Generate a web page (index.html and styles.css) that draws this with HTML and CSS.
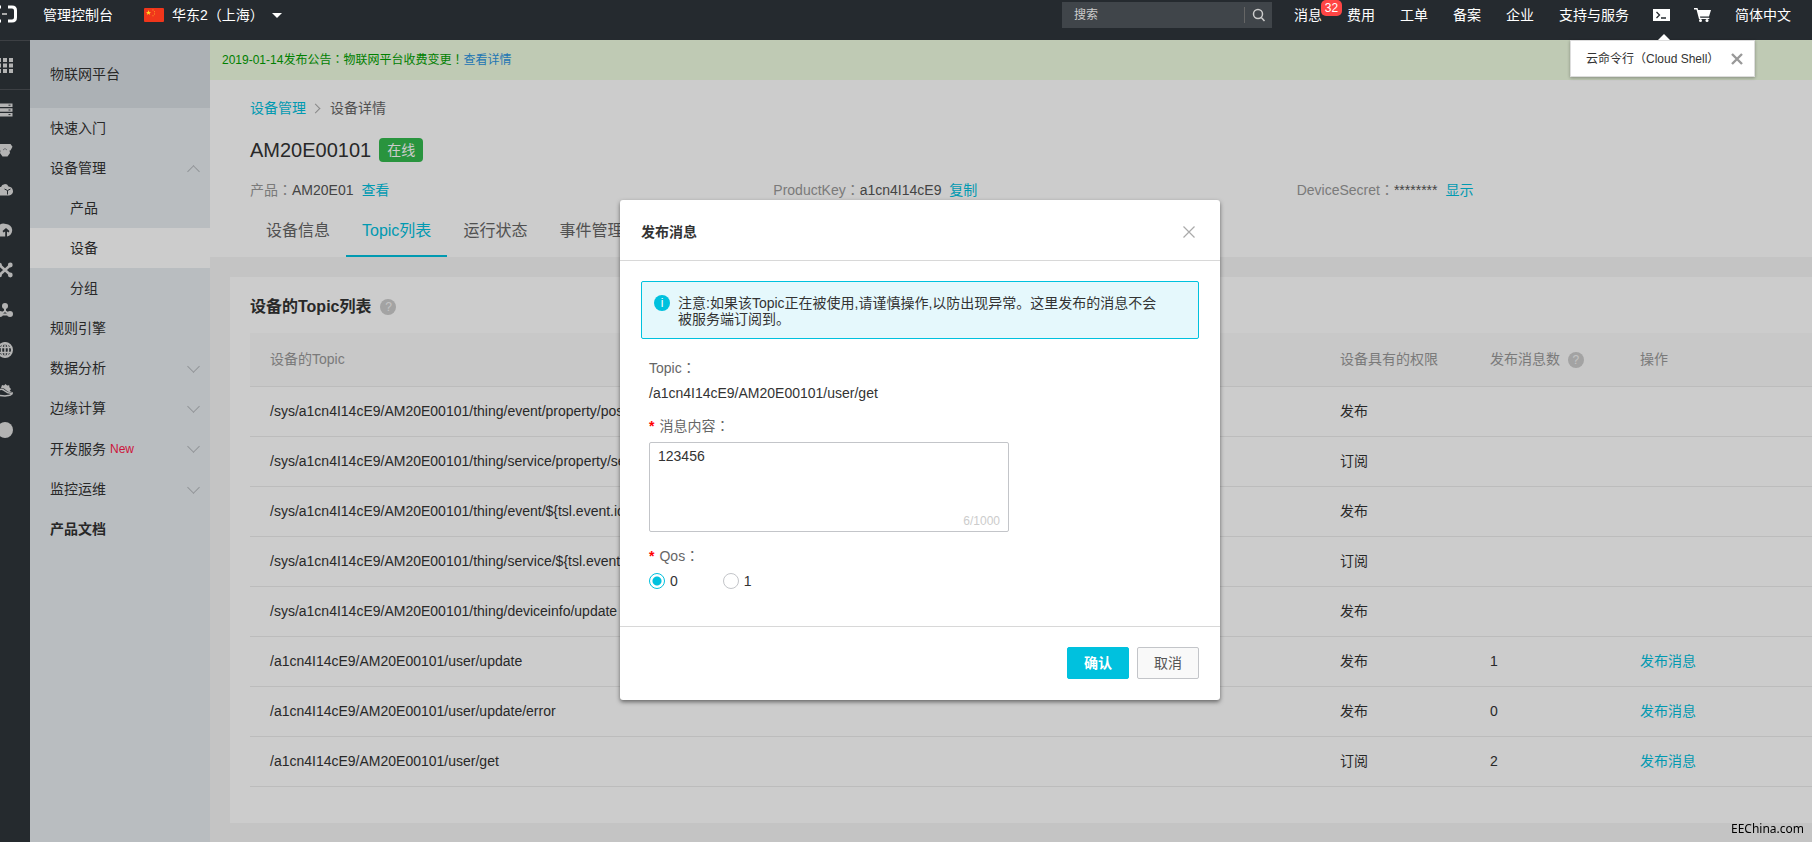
FILE: index.html
```html
<!DOCTYPE html>
<html lang="zh-CN">
<head>
  <meta charset="utf-8">
  <title>物联网平台</title>
  <link rel="stylesheet" href="styles.css">
</head>
<body>
  <header class="topbar">
    <a href="#" class="logo" aria-label="home">
      <svg width="26" height="18" viewBox="0 0 26 18" fill="none" stroke="#fff" stroke-width="3">
        <path d="M10 2H5Q1.500 2 1.500 5.500V12.500Q1.500 16 5 16H10"/>
        <path d="M17 2H21Q24.500 2 24.500 5.500V12.500Q24.500 16 21 16H17"/>
        <path d="M11 9H16" stroke="#aaa" stroke-width="2"/>
      </svg>
    </a>
    <a href="#" class="console">管理控制台</a>
    <button class="region">
      <svg width="20" height="14" viewBox="0 0 20 14">
        <rect width="20" height="14" rx="1" fill="#f0361b"/>
        <path d="M4.500 2l.7 1.900h2l-1.600 1.200.6 1.900-1.700-1.200-1.700 1.200.6-1.900-1.600-1.200h2z" fill="#ffd522"/>
        <path d="M8.500 1.500h1v1h-1zM10 3.300h1v1h-1zM10 5.500h1v1h-1zM8.500 7.200h1v1h-1z" fill="#ff9d22"/>
      </svg>
      <span>华东2（上海）</span>
      <i class="caret"></i>
    </button>
    <div class="search">
      <input type="text" placeholder="搜索" aria-label="搜索">
      <button aria-label="搜索">
        <svg width="14" height="14" viewBox="0 0 14 14" fill="none" stroke="#ccc" stroke-width="1.500"><circle cx="6" cy="6" r="4.500"/><path d="M9.300 9.500L12.500 13"/></svg>
      </button>
    </div>
    <nav class="top-links">
      <a href="#" class="msg">消息<span class="count">32</span></a>
      <a href="#">费用</a>
      <a href="#">工单</a>
      <a href="#">备案</a>
      <a href="#">企业</a>
      <a href="#">支持与服务</a>
    </nav>
    <div class="top-icons">
      <div class="shell-link">
        <a href="#" aria-label="Cloud Shell">
          <svg width="17" height="12" viewBox="0 0 17 12"><rect width="17" height="12" fill="#fff"/><path d="M3.500 3l3 3-3 3M8 9h5" fill="none" stroke="#252a2f" stroke-width="1.300"/></svg>
        </a>
        <div class="shell-tip">
          <span>云命令行（Cloud Shell）</span>
          <button aria-label="关闭">
            <svg width="12" height="12" viewBox="0 0 12 12" stroke="#999" stroke-width="2.400"><path d="M1 1l10 10M11 1L1 11"/></svg>
          </button>
        </div>
      </div>
      <a href="#" aria-label="cart">
        <svg width="17" height="14" viewBox="0 0 17 14" fill="#fff"><path d="M0 0h3.500l.6 2H17l-2 6.500H6l.3 1.200h9V11H5L2.500 1.500H0z"/><circle cx="6.500" cy="12.500" r="1.500"/><circle cx="13" cy="12.500" r="1.500"/></svg>
      </a>
      <a href="#">简体中文</a>
    </div>
  </header>

  <div class="page">
    <nav class="rail">
      <a href="#" class="apps" aria-label="全部产品">
        <svg width="16" height="16" viewBox="0 0 16 16"><path d="M0 1h4v4H0zM6 1h4v4H6zM12 1h4v4h-4zM0 6.500h4v4H0zM6 6.500h4v4H6zM12 6.500h4v4h-4zM0 12h4v4H0zM6 12h4v4H6zM12 12h4v4h-4z"/></svg>
      </a>
      <a href="#" aria-label="ECS"><svg width="16" height="16" viewBox="0 0 16 16"><path d="M0 1.500h15.500v3.500H0zM0 6.200h15.500v3.500H0zM0 10.900h15.500v3.500H0z"/><path d="M11.500 3.200h2M11.500 8h2M11.500 12.600h2" stroke="#2f353a"/></svg></a>
      <a href="#" aria-label="RDS"><svg width="16" height="16" viewBox="0 0 16 16"><path d="M1.500 2h12l2 2.800-2 3.700h-1l.5 2.500-2.500 3.500h-5L3 11l.5-2.500h-2L0 4.800z"/><path d="M6 8l2-1.500L10 8" fill="none" stroke="#8a8e92"/></svg></a>
      <a href="#" aria-label="云"><svg width="16" height="16" viewBox="0 0 16 16"><path d="M4 5a4 4 0 0 1 7.500-.5A5 5 0 0 1 16 9a4.200 4.200 0 0 1-4 4.500H3A4 4 0 0 1 0 9.500 4 4 0 0 1 4 5z"/><path d="M10.500 8.500l3-1.500M10.500 8.500v4M10.500 8.500L7.500 7" stroke="#2f353a" stroke-width="1" fill="none"/></svg></a>
      <a href="#" aria-label="OSS"><svg width="16" height="16" viewBox="0 0 16 16"><path d="M0 11a7 7 0 0 1 9-9 6.300 6.300 0 0 1 1 12.500V9.500l1.500 1L12.500 9 9 6 5.500 9l1 1.500 1.700-1v5H1z"/></svg></a>
      <a href="#" aria-label="CDN"><svg width="16" height="16" viewBox="0 0 16 16"><path d="M2.500 3l11 10M13.500 3l-11 10" stroke="#e0e0e0" stroke-width="2.600"/><circle cx="2.500" cy="3" r="2.400"/><circle cx="13.300" cy="3" r="2.400"/><circle cx="2.500" cy="13" r="2.400"/><circle cx="13.300" cy="13" r="2.400"/></svg></a>
      <a href="#" aria-label="SLB"><svg width="16" height="16" viewBox="0 0 16 16"><path d="M8 4v5M8 9l-5 3.500M8 9l5 3.500M3 12.500h10" stroke="#e0e0e0" stroke-width="2"/><circle cx="8" cy="4" r="3"/><circle cx="3" cy="12" r="3"/><circle cx="13" cy="12" r="3"/></svg></a>
      <a href="#" aria-label="域名"><svg width="16" height="16" viewBox="0 0 16 16" fill="none" stroke="#e0e0e0" stroke-width="2"><circle cx="8" cy="8" r="7"/><ellipse cx="8" cy="8" rx="3.500" ry="7" stroke-width="1.500"/><path d="M1 5.500h14M1 10.500h14M8 1v14" stroke-width="1.500"/></svg></a>
      <a href="#" aria-label="云监控"><svg width="16" height="16" viewBox="0 0 16 16"><path d="M4 6l1-3 2 .5L8.500 2l1.600 1.500 2.100-.3.200 2L14 7l-1.300 2 3.300 1.500-5-.8L7 6.500z"/><path d="M2 8q3-2 6 1t8 2q-3 3-5 2.500L8 14l-6-.5" fill="none" stroke="#e0e0e0" stroke-width="1.500"/></svg></a>
      <a href="#" aria-label="更多"><svg width="16" height="16" viewBox="0 0 16 16"><circle cx="8" cy="8" r="8"/></svg></a>
    </nav>

    <aside class="sidebar">
      <h2>物联网平台</h2>
      <ul>
        <li><a href="#">快速入门</a></li>
        <li><a href="#">设备管理 <i class="chev up"></i></a></li>
        <li><a href="#" class="sub">产品</a></li>
        <li><a href="#" class="sub active">设备</a></li>
        <li><a href="#" class="sub">分组</a></li>
        <li><a href="#">规则引擎</a></li>
        <li><a href="#">数据分析 <i class="chev"></i></a></li>
        <li><a href="#">边缘计算 <i class="chev"></i></a></li>
        <li><a href="#" class="has-new">开发服务 <span class="new">New</span> <i class="chev"></i></a></li>
        <li><a href="#">监控运维 <i class="chev"></i></a></li>
        <li><a href="#"><b>产品文档</b></a></li>
      </ul>
    </aside>

    <main>
      <div class="notice-bar">2019-01-14发布公告<span class="mark" lang="zh-TW">：</span>物联网平台收费变更<span class="mark" lang="zh-TW">！</span><a href="#">查看详情</a></div>

      <section class="device">
        <div class="crumbs"><a href="#">设备管理</a><i></i><span>设备详情</span></div>
        <div class="name"><h1>AM20E00101</h1><span class="online">在线</span></div>
        <div class="info">
          <div><span class="key">产品<span class="mark" lang="zh-TW">：</span></span>AM20E01 <a href="#">查看</a></div>
          <div><span class="key">ProductKey<span class="mark" lang="zh-TW">：</span></span>a1cn4I14cE9 <a href="#">复制</a></div>
          <div><span class="key">DeviceSecret<span class="mark" lang="zh-TW">：</span></span>******** <a href="#">显示</a></div>
        </div>
        <div class="tabs">
          <a href="#">设备信息</a>
          <a href="#" class="active">Topic列表</a>
          <a href="#">运行状态</a>
          <a href="#">事件管理</a>
        </div>
      </section>

      <section class="card">
        <h3>设备的Topic列表 <i class="help">?</i></h3>
        <table>
          <colgroup><col><col class="col-auth"><col class="col-num"><col class="col-act"></colgroup>
          <thead>
            <tr><th>设备的Topic</th><th>设备具有的权限</th><th>发布消息数 <i class="help">?</i></th><th>操作</th></tr>
          </thead>
          <tbody>
            <tr><td>/sys/a1cn4I14cE9/AM20E00101/thing/event/property/post</td><td>发布</td><td></td><td></td></tr>
            <tr><td>/sys/a1cn4I14cE9/AM20E00101/thing/service/property/set</td><td>订阅</td><td></td><td></td></tr>
            <tr><td>/sys/a1cn4I14cE9/AM20E00101/thing/event/${tsl.event.id}</td><td>发布</td><td></td><td></td></tr>
            <tr><td>/sys/a1cn4I14cE9/AM20E00101/thing/service/${tsl.event}</td><td>订阅</td><td></td><td></td></tr>
            <tr><td>/sys/a1cn4I14cE9/AM20E00101/thing/deviceinfo/update</td><td>发布</td><td></td><td></td></tr>
            <tr><td>/a1cn4I14cE9/AM20E00101/user/update</td><td>发布</td><td>1</td><td><a href="#">发布消息</a></td></tr>
            <tr><td>/a1cn4I14cE9/AM20E00101/user/update/error</td><td>发布</td><td>0</td><td><a href="#">发布消息</a></td></tr>
            <tr><td>/a1cn4I14cE9/AM20E00101/user/get</td><td>订阅</td><td>2</td><td><a href="#">发布消息</a></td></tr>
          </tbody>
        </table>
      </section>
    </main>

    <div class="overlay">
      <form class="modal" role="dialog" aria-labelledby="modal-title">
        <div class="modal-head">
          <h4 id="modal-title">发布消息</h4>
          <button type="button" class="close" aria-label="关闭">
            <svg width="12" height="12" viewBox="0 0 12 12" stroke="#aaa" stroke-width="1.200"><path d="M.5.5l11 11M11.500.5l-11 11"/></svg>
          </button>
        </div>
        <div class="modal-body">
          <div class="alert">
            <i class="info-dot">i</i>
            <p>注意:如果该Topic正在被使用,请谨慎操作,以防出现异常。这里发布的消息不会被服务端订阅到。</p>
          </div>
          <div class="fields">
            <div class="label">Topic<span class="mark" lang="zh-TW">：</span></div>
            <div class="value">/a1cn4I14cE9/AM20E00101/user/get</div>
            <label class="label" for="content"><em>*</em>消息内容<span class="mark" lang="zh-TW">：</span></label>
            <div class="area">
              <textarea id="content">123456</textarea>
              <span>6/1000</span>
            </div>
            <div class="label"><em>*</em>Qos<span class="mark" lang="zh-TW">：</span></div>
            <div class="radios">
              <label><input type="radio" name="qos" checked>0</label>
              <label><input type="radio" name="qos">1</label>
            </div>
          </div>
        </div>
        <div class="modal-foot">
          <button type="button" class="btn primary">确认</button>
          <button type="button" class="btn">取消</button>
        </div>
      </form>
    </div>
  </div>
  <div class="watermark">EEChina.com</div>
</body>
</html>
```

FILE: styles.css
```css
* {
  box-sizing: border-box;
}
body {
  margin: 0;
  overflow: hidden;
  font: 14px/20px "Liberation Sans", "Noto Sans CJK SC", sans-serif;
  color: #333;
  background: #f5f5f5;
}
a {
  color: #00c1de;
  text-decoration: none;
}
button {
  border: 0;
  padding: 0;
  background: none;
  font: inherit;
  color: inherit;
}
h1, h2, h3, h4, p, ul {
  margin: 0;
  padding: 0;
  font-weight: normal;
}
i, em {
  font-style: normal;
}
svg {
  display: block;
}
/* full-width punctuation centred in its box */
.mark {
  font-family: "Noto Sans CJK TC", sans-serif;
  line-height: 1;
}

/* top bar */
.topbar {
  position: relative;
  z-index: 10;
  display: flex;
  align-items: center;
  height: 40px;
  padding: 0 21px 10px 0;
  background: #252a2f;
  color: #fff;
  white-space: nowrap;
}
.topbar a {
  color: #fff;
}
.logo {
  margin: -2px 0 0 -9px;
}
.console {
  margin: 0 31px 0 26px;
}
.region {
  display: flex;
  align-items: center;
  gap: 8px;
}
.caret {
  border: 5px solid transparent;
  border-top-color: #fff;
  border-bottom: 0;
}
.search {
  display: flex;
  align-items: center;
  width: 210px;
  height: 26px;
  margin-left: auto;
  background: #40454a;
}
.search input {
  flex: 1;
  min-width: 0;
  padding: 0 12px;
  border: 0;
  background: none;
  font: 12px "Liberation Sans", "Noto Sans CJK SC", sans-serif;
}
.search input::placeholder {
  color: #ccc;
}
.search button {
  padding: 1px 6px 1px 7px;
  border-left: 1px solid #666;
}
.top-links {
  display: flex;
  gap: 25px;
  margin: 0 24px 0 22px;
}
.msg {
  position: relative;
}
.count {
  position: absolute;
  top: -5px;
  left: 27px;
  width: 21px;
  border-radius: 5px;
  background: #ff4544;
  font-size: 12px;
  line-height: 16px;
  text-align: center;
}
.top-icons {
  display: flex;
  align-items: center;
  gap: 24px;
}
.shell-link {
  position: relative;
}
.shell-tip {
  position: absolute;
  top: 31px;
  right: -85px;
  display: flex;
  align-items: center;
  justify-content: space-between;
  width: 185px;
  height: 37px;
  padding: 0 11px 0 15px;
  border: 1px solid #ddd;
  background: #fff;
  box-shadow: 0 1px 3px rgba(0, 0, 0, .3);
  color: #333;
  font-size: 12px;
}
.shell-tip::before {
  content: "";
  position: absolute;
  top: -7px;
  left: 87px;
  border: 6px solid transparent;
  border-bottom-color: #fff;
  border-top: 0;
}

.page {
  position: relative;
  display: flex;
  min-height: calc(100vh - 40px);
  margin-right: -28px;
}

/* product rail, partly off the left edge */
.rail {
  width: 30px;
  border-top: 1px solid #4d5155;
  background: #2f353a;
}
.rail a {
  display: flex;
  align-items: center;
  height: 40px;
  margin-left: -3px;
}
.rail .apps {
  height: 49px;
  border-bottom: 1px solid #4d5155;
}
.rail svg {
  fill: #e0e0e0;
}
.rail svg[fill="none"] {
  fill: none;
}

.sidebar {
  width: 180px;
  background: #e8edf1;
}
.sidebar h2 {
  height: 68px;
  padding: 0 20px;
  background: #d8dee3;
  font-size: 14px;
  line-height: 68px;
}
.sidebar ul {
  list-style: none;
}
.sidebar li a {
  display: flex;
  align-items: center;
  height: 40px;
  padding: 0 12px 0 20px;
  color: #333;
}
.sidebar li .sub {
  padding-left: 40px;
}
.sidebar li .has-new {
  height: 41px;
}
.sidebar .active {
  background: #fff;
}
.new {
  margin-left: 4px;
  color: #ff1a4b;
  font-size: 12px;
}
.chev {
  width: 9px;
  height: 9px;
  margin: -4px 0 0 auto;
  border: solid #b5babe;
  border-width: 0 1px 1px 0;
  transform: rotate(45deg);
}
.chev.up {
  margin-top: 6px;
  transform: rotate(225deg);
}

main {
  flex: 1;
  min-width: 0;
  background: #f5f5f5;
}
.notice-bar {
  height: 40px;
  padding-left: 12px;
  background: #effde1;
  color: #00a000;
  font-size: 12px;
  line-height: 40px;
}
.notice-bar a {
  color: #2a94e0;
}
.device {
  padding: 18px 20px 0 40px;
  background: #fff;
}
.crumbs {
  display: flex;
  align-items: center;
  color: #666;
}
.crumbs i {
  width: 7px;
  height: 7px;
  margin: 0 11px 0 6px;
  border: solid #aaa;
  border-width: 1px 1px 0 0;
  transform: rotate(45deg);
}
.name {
  display: flex;
  align-items: center;
  gap: 8px;
  margin: 20px 0 18px;
}
.name h1 {
  font-size: 20px;
  line-height: 24px;
}
.online {
  padding: 0 8px;
  border-radius: 4px;
  background: #34b94e;
  color: #fff;
  line-height: 24px;
}
.info {
  display: grid;
  grid-template-columns: repeat(3, 1fr);
  color: #555;
}
.key {
  color: #999;
}
.info a {
  margin-left: 4px;
}
.tabs {
  display: flex;
  margin-top: 7px;
  font-size: 16px;
}
.tabs a {
  height: 50px;
  padding: 0 16px;
  color: #666;
  line-height: 48px;
}
.tabs .active {
  border-bottom: 2px solid #00c1de;
  color: #00c1de;
}

.card {
  margin: 20px;
  padding: 20px 0 36px 20px;
  background: #fff;
}
.card h3 {
  display: flex;
  align-items: center;
  gap: 9px;
  margin-bottom: 16px;
  font-size: 16px;
  font-weight: bold;
}
.help {
  display: inline-block;
  width: 16px;
  border-radius: 8px;
  background: #ccc;
  color: #f5f5f5;
  font-size: 12px;
  font-weight: normal;
  line-height: 16px;
  text-align: center;
}
table {
  width: 100%;
  border-collapse: collapse;
  table-layout: fixed;
}
.col-auth, .col-num {
  width: 150px;
}
.col-act {
  width: 200px;
}
th, td {
  height: 50px;
  padding: 0 20px;
  border-bottom: 1px solid #ebebeb;
  text-align: left;
  white-space: nowrap;
}
th {
  height: 53px;
  background: #fafafa;
  color: #999;
  font-weight: normal;
}
th .help {
  margin-left: 4px;
}

/* publish dialog */
.overlay {
  position: absolute;
  inset: 0;
  padding-top: 160px;
  background: rgba(0, 0, 0, .2);
}
.modal {
  width: 600px;
  margin: 0 auto;
  border-radius: 3px;
  background: #fff;
  box-shadow: 0 2px 4px rgba(0, 0, 0, .5);
}
.modal-head {
  display: flex;
  align-items: center;
  justify-content: space-between;
  height: 61px;
  padding: 4px 25px 0 21px;
  border-bottom: 1px solid #d8d8d8;
}
.modal-head h4 {
  font-weight: bold;
}
.modal-body {
  padding: 20px 21px 27px;
}
.alert {
  display: flex;
  gap: 8px;
  height: 58px;
  padding: 13px 36px 0 12px;
  border: 1px solid #00c1de;
  border-radius: 2px;
  background: #e5f8fc;
  line-height: 16px;
}
.info-dot {
  flex: none;
  width: 16px;
  height: 16px;
  border-radius: 8px;
  background: #00c1de;
  color: #fff;
  font-size: 12px;
  text-align: center;
}
.fields {
  padding: 17px 8px 0;
}
.label {
  display: block;
  height: 25px;
  line-height: 25px;
  color: #666;
}
.label em {
  margin-right: 5px;
  color: #f00;
  font-weight: bold;
}
.value {
  margin-bottom: 8px;
  line-height: 25px;
}
.area {
  position: relative;
  width: 360px;
  margin: 3px 0 12px;
}
.area textarea {
  display: block;
  width: 100%;
  height: 90px;
  padding: 3px 8px;
  border: 1px solid #c3c5c9;
  border-radius: 2px;
  resize: none;
  font: inherit;
  color: #333;
}
.area span {
  position: absolute;
  right: 9px;
  bottom: 1px;
  color: #ccc;
  font-size: 12px;
}
.radios {
  display: flex;
  gap: 45px;
  height: 30px;
}
.radios label {
  display: flex;
  align-items: center;
  gap: 5px;
  height: 24px;
}
.radios input {
  width: 16px;
  height: 16px;
  margin: 0;
  border: 1px solid #c3c5c9;
  border-radius: 50%;
  appearance: none;
}
.radios input:checked {
  border-color: #00c1de;
  background: radial-gradient(#00c1de 4px, #fff 5px);
}
.modal-foot {
  display: flex;
  justify-content: flex-end;
  gap: 8px;
  padding: 20px 21px 21px;
  border-top: 1px solid #d8d8d8;
}
.btn {
  width: 62px;
  height: 32px;
  border: 1px solid #c3c5c9;
  border-radius: 2px;
  background: #f9f9f9;
  color: #555;
}
.btn.primary {
  border-color: #00c1de;
  background: #00c1de;
  color: #fff;
  font-weight: bold;
}

.watermark {
  position: fixed;
  right: 8px;
  bottom: 3px;
  color: #000;
  font: 12px/20px "Noto Sans", sans-serif;
}
```
